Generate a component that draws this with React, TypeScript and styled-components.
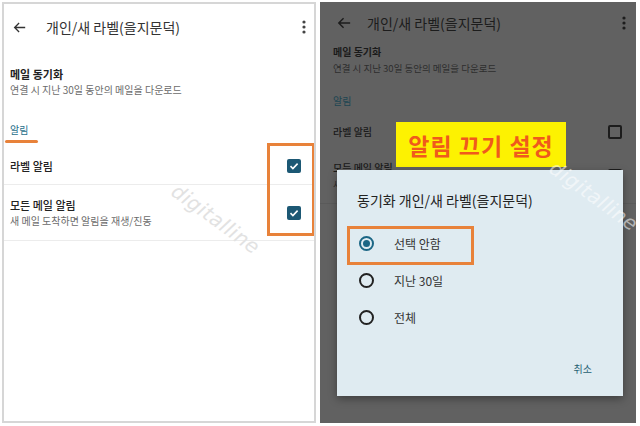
import React, { FC } from 'react';
import styled, { createGlobalStyle, css } from 'styled-components';

const GlobalStyle = createGlobalStyle`
    html, body {
        margin: 0;
        padding: 0;
        background: #ffffff;
        font-family: "Noto Sans CJK KR", "Noto Sans", sans-serif;
    }
    * {
        box-sizing: border-box;
    }
`;

const Page = styled.div`
    display: flex;
    gap: 4px;
    width: 640px;
    height: 426px;
    padding: 2px 4px 3px 2px;
`;

const Panel = styled.section<{ $dim?: boolean }>`
    position: relative;
    height: 421px;
    display: flex;
    flex-direction: column;
    ${({ $dim }) =>
        $dim
            ? css`
                  width: 316px;
                  background: #616161;
                  color: #1a1a1a;
              `
            : css`
                  width: 314px;
                  background: #ffffff;
                  border: 2px solid #d6d6d6;
                  color: #222222;
                  overflow: hidden;
              `}
`;

const Header = styled.header<{ $dim?: boolean }>`
    display: flex;
    align-items: center;
    height: ${({ $dim }) => ($dim ? '42px' : '46px')};
    padding: ${({ $dim }) => ($dim ? '0 10px 0 17px' : '0 8px 0 9px')};
`;

const HeaderTitle = styled.h1<{ $dim?: boolean }>`
    flex: 1;
    margin: 0 0 0 ${({ $dim }) => ($dim ? '16px' : '20px')};
    font-size: 14px;
    font-weight: 400;
    line-height: 20px;
    color: ${({ $dim }) => ($dim ? '#1c1c1c' : '#333333')};
`;

const Section = styled.div<{ $dim?: boolean }>`
    padding: ${({ $dim }) => ($dim ? '0 13px' : '16px 6px 0')};
`;

const ItemTitle = styled.div<{ $dim?: boolean; $strong?: boolean }>`
    font-size: ${({ $dim }) => ($dim ? '10px' : '11px')};
    font-weight: ${({ $strong }) => ($strong ? 700 : 500)};
    line-height: 16px;
`;

const ItemSub = styled.div<{ $dim?: boolean }>`
    margin-top: 1px;
    font-size: ${({ $dim }) => ($dim ? '9.5px' : '10px')};
    line-height: 14px;
    color: ${({ $dim }) => ($dim ? '#2e2e2e' : '#6b6b6b')};
`;

const Category = styled.div<{ $dim?: boolean; $marked?: boolean }>`
    position: relative;
    display: inline-block;
    margin-top: ${({ $dim }) => ($dim ? '19px' : '26px')};
    font-size: 10px;
    line-height: 14px;
    color: ${({ $dim }) => ($dim ? '#1d4552' : '#1f6f8b')};
    ${({ $marked }) =>
        $marked &&
        css`
            &::after {
                content: '';
                position: absolute;
                left: -5px;
                bottom: -6px;
                width: 33px;
                height: 3px;
                border-radius: 2px;
                background: #e8823a;
            }
        `}
`;

const Row = styled.div<{ $dim?: boolean; $tall?: boolean }>`
    display: flex;
    align-items: center;
    justify-content: space-between;
    height: ${({ $tall, $dim }) => ($tall ? '56px' : $dim ? '32px' : '38px')};
    padding: ${({ $dim }) => ($dim ? '0 14px 0 13px' : '0 13px 0 6px')};
    border-bottom: 1px solid ${({ $dim }) => ($dim ? '#5a5a5a' : '#ececec')};
`;

const RowText = styled.div`
    display: flex;
    flex-direction: column;
`;

const CheckBox = styled.span<{ $checked?: boolean }>`
    display: inline-flex;
    align-items: center;
    justify-content: center;
    width: 14px;
    height: 14px;
    border-radius: 2px;
    ${({ $checked }) =>
        $checked
            ? css`
                  background: #1c5874;
              `
            : css`
                  border: 2px solid #1c1c1c;
              `}
`;

const Highlight = styled.div`
    position: absolute;
    left: 263px;
    top: 139px;
    width: 48px;
    height: 93px;
    border: 3px solid #e8823a;
`;

const Watermark = styled.div<{ $light?: boolean }>`
    position: absolute;
    font-family: "DejaVu Sans", sans-serif;
    font-style: italic;
    font-size: 20px;
    letter-spacing: 0.5px;
    transform: rotate(36deg);
    white-space: nowrap;
    pointer-events: none;
    color: ${({ $light }) => ($light ? 'rgba(255, 255, 255, 0.55)' : '#e2e2e2')};
`;

const Banner = styled.div`
    position: absolute;
    left: 76px;
    top: 120px;
    width: 170px;
    height: 45px;
    display: flex;
    align-items: center;
    justify-content: center;
    background: #fdf201;
    color: #f05a1c;
    font-size: 23px;
    font-weight: 700;
    letter-spacing: 1px;
`;

const Dialog = styled.div`
    position: absolute;
    left: 17px;
    top: 168px;
    width: 286px;
    height: 226px;
    display: flex;
    flex-direction: column;
    padding: 20px 0 0;
    background: #dfebf1;
    box-shadow: 0 3px 8px rgba(0, 0, 0, 0.35);
`;

const DialogTitle = styled.div`
    padding-left: 20px;
    font-size: 14px;
    line-height: 20px;
    color: #222222;
`;

const OptionList = styled.div`
    margin-top: 15px;
    display: flex;
    flex-direction: column;
`;

const Option = styled.div<{ $highlight?: boolean }>`
    position: relative;
    display: flex;
    align-items: center;
    gap: 20px;
    height: 37px;
    padding-left: 22px;
    font-size: 12px;
    color: #333333;
    ${({ $highlight }) =>
        $highlight &&
        css`
            &::after {
                content: '';
                position: absolute;
                left: 10px;
                top: 1px;
                width: 121px;
                height: 33px;
                border: 3px solid #e8823a;
            }
        `}
`;

const Radio = styled.span<{ $on?: boolean }>`
    display: inline-flex;
    align-items: center;
    justify-content: center;
    width: 15px;
    height: 15px;
    border-radius: 50%;
    border: 2px solid ${({ $on }) => ($on ? '#1b6685' : '#222222')};
    &::before {
        content: '';
        width: 7px;
        height: 7px;
        border-radius: 50%;
        background: ${({ $on }) => ($on ? '#1b6685' : 'transparent')};
    }
`;

const DialogActions = styled.div`
    display: flex;
    justify-content: flex-end;
    margin-top: 26px;
    padding-right: 31px;
`;

const TextButton = styled.span`
    font-size: 10px;
    line-height: 14px;
    color: #1f5f72;
`;

const BackArrow: FC<{ color: string; size: number }> = ({ color, size }) => (
    <svg width={size} height={size} viewBox="0 0 16 16" fill="none">
        <path d="M15 8H2M7.5 2.5L2 8l5.5 5.5" stroke={color} strokeWidth="1.6" />
    </svg>
);

const MoreDots: FC<{ color: string }> = ({ color }) => (
    <svg width="4" height="14" viewBox="0 0 4 14">
        <circle cx="2" cy="2" r="1.6" fill={color} />
        <circle cx="2" cy="7" r="1.6" fill={color} />
        <circle cx="2" cy="12" r="1.6" fill={color} />
    </svg>
);

const Check: FC = () => (
    <svg width="10" height="10" viewBox="0 0 10 10" fill="none">
        <path d="M1.5 5.2l2.4 2.3L8.6 2.6" stroke="#ffffff" strokeWidth="1.6" />
    </svg>
);

const TITLE = '개인/새 라벨(을지문덕)';

const SettingsPanel: FC = () => (
    <Panel>
        <Header>
            <BackArrow color="#333333" size={13} />
            <HeaderTitle>{TITLE}</HeaderTitle>
            <MoreDots color="#444444" />
        </Header>
        <Section>
            <ItemTitle $strong>메일 동기화</ItemTitle>
            <ItemSub>연결 시 지난 30일 동안의 메일을 다운로드</ItemSub>
            <Category $marked>알림</Category>
        </Section>
        <Row style={{ marginTop: 8 }}>
            <ItemTitle>라벨 알림</ItemTitle>
            <CheckBox $checked>
                <Check />
            </CheckBox>
        </Row>
        <Row $tall>
            <RowText>
                <ItemTitle>모든 메일 알림</ItemTitle>
                <ItemSub>새 메일 도착하면 알림을 재생/진동</ItemSub>
            </RowText>
            <CheckBox $checked>
                <Check />
            </CheckBox>
        </Row>
        <Highlight />
        <Watermark style={{ left: 160, top: 203 }}>digitalline</Watermark>
    </Panel>
);

const options = ['선택 안함', '지난 30일', '전체'];

const DialogPanel: FC = () => (
    <Panel $dim>
        <Header $dim>
            <BackArrow color="#1c1c1c" size={14} />
            <HeaderTitle $dim>{TITLE}</HeaderTitle>
            <MoreDots color="#1c1c1c" />
        </Header>
        <Section $dim>
            <ItemTitle $dim $strong>메일 동기화</ItemTitle>
            <ItemSub $dim>연결 시 지난 30일 동안의 메일을 다운로드</ItemSub>
            <Category $dim>알림</Category>
        </Section>
        <Row $dim style={{ marginTop: 6, borderBottom: 'none' }}>
            <ItemTitle $dim>라벨 알림</ItemTitle>
            <CheckBox />
        </Row>
        <Row $dim $tall>
            <RowText>
                <ItemTitle $dim>모든 메일 알림</ItemTitle>
                <ItemSub $dim>새 메일 도착하면 알림을 재생/진동</ItemSub>
            </RowText>
            <CheckBox />
        </Row>
        <Banner>알림 끄기 설정</Banner>
        <Dialog>
            <DialogTitle>동기화 {TITLE}</DialogTitle>
            <OptionList>
                {options.map((label, i) => (
                    <Option key={label} $highlight={i === 0}>
                        <Radio $on={i === 0} />
                        {label}
                    </Option>
                ))}
            </OptionList>
            <DialogActions>
                <TextButton>취소</TextButton>
            </DialogActions>
        </Dialog>
        <Watermark $light style={{ left: 222, top: 182 }}>
            digitalline
        </Watermark>
    </Panel>
);

const App: FC = () => (
    <>
        <GlobalStyle />
        <Page>
            <SettingsPanel />
            <DialogPanel />
        </Page>
    </>
);

export default App;
